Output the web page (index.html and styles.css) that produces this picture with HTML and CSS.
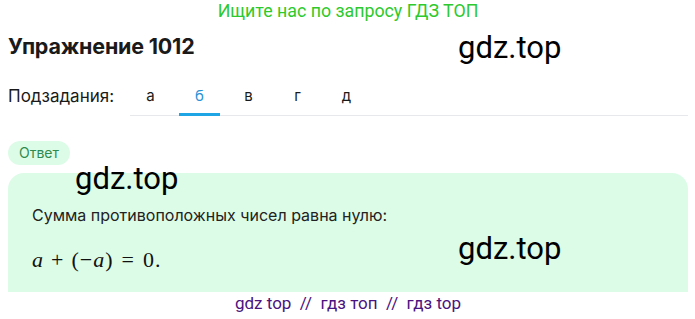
FILE: index.html
```html
<!DOCTYPE html>
<html lang="ru">
<head>
    <meta charset="UTF-8">
    <meta name="viewport" content="width=device-width, initial-scale=1.0">
    <title>Упражнение 1012 - ГДЗ ТОП</title>
    <link rel="stylesheet" href="styles.css">
</head>
<body>
    <div class="search-hint">Ищите нас по запросу ГДЗ ТОП</div>
    <h1 class="title">Упражнение 1012</h1>
    <div class="subtasks">
        <span class="subtasks-label">Подзадания:</span>
        <div class="tabs">
            <a class="tab">а</a>
            <a class="tab active">б</a>
            <a class="tab">в</a>
            <a class="tab">г</a>
            <a class="tab">д</a>
        </div>
    </div>
    <span class="answer-pill">Ответ</span>
    <div class="answer-box">
        <p class="answer-text">Сумма противоположных чисел равна нулю:</p>
        <p class="math"><i>a</i><span class="bin">+</span>(−<i>a</i>)<span class="rel">=</span>0.</p>
    </div>
    <div class="footer">gdz top &nbsp;//&nbsp; гдз топ &nbsp;//&nbsp; гдз top</div>

    <div class="watermark wm-1">gdz.top</div>
    <div class="watermark wm-2">gdz.top</div>
    <div class="watermark wm-3">gdz.top</div>
</body>
</html>
```

FILE: styles.css
```css
* {
    margin: 0;
    padding: 0;
    box-sizing: border-box;
}
html, body {
    width: 100%;
    height: 100%;
    background: white;
}
body {
    font-family: 'Inter', 'Noto Sans', sans-serif;
    color: #1a1a1a;
    padding: 0 7px 0 8px;
    position: relative;
    overflow: hidden;
}
.search-hint {
    font-family: 'Roboto', sans-serif;
    font-size: 17.8px;
    color: #2dc92d;
    text-align: center;
    height: 24px;
    line-height: 22px;
}
.title {
    font-size: 21.5px;
    font-weight: 700;
    letter-spacing: -0.2px;
    line-height: 24px;
    margin-top: 10px;
}
.subtasks {
    display: flex;
    align-items: stretch;
    margin-top: 23px;
}
.subtasks-label {
    font-size: 17px;
    line-height: 24px;
    padding-top: 3px;
    width: 122px;
}
.tabs {
    flex: 1;
    display: flex;
    gap: 8px;
    border-bottom: 1px solid #e6e8eb;
}
.tab {
    width: 41px;
    text-align: center;
    font-size: 15px;
    line-height: 24px;
    padding: 3px 0 5px;
    color: #1a1a1a;
    border-bottom: 3px solid transparent;
    margin-bottom: -1px;
}
.tab.active {
    color: #2a93d5;
    border-bottom-color: #1ea5e6;
}
.answer-pill {
    display: inline-block;
    margin-top: 25px;
    height: 24px;
    line-height: 24px;
    padding: 0 11px;
    border-radius: 12px;
    background: #dcfce7;
    color: #2f8a4e;
    font-size: 14px;
}
.answer-box {
    margin-top: 8px;
    background: #dcfce7;
    border-radius: 16px 16px 0 0;
    height: 119px;
    padding: 30px 24px 0;
}
.answer-text {
    font-size: 16px;
    line-height: 24px;
    color: #222;
}
.math {
    font-family: 'Liberation Serif', serif;
    font-size: 22px;
    letter-spacing: 1px;
    margin-top: 20px;
    color: #111;
}
.math .bin {
    margin: 0 7px;
}
.math .rel {
    margin: 0 8px;
}
.footer {
    font-family: 'Roboto', sans-serif;
    font-size: 17px;
    color: #4a1380;
    text-align: center;
    line-height: 22px;
}
.watermark {
    position: absolute;
    font-family: 'Roboto', sans-serif;
    font-size: 31px;
    color: #000;
    line-height: 36px;
}
.wm-1 { left: 458px; top: 30px; }
.wm-2 { left: 75px; top: 161px; }
.wm-3 { left: 458px; top: 231px; }
```
